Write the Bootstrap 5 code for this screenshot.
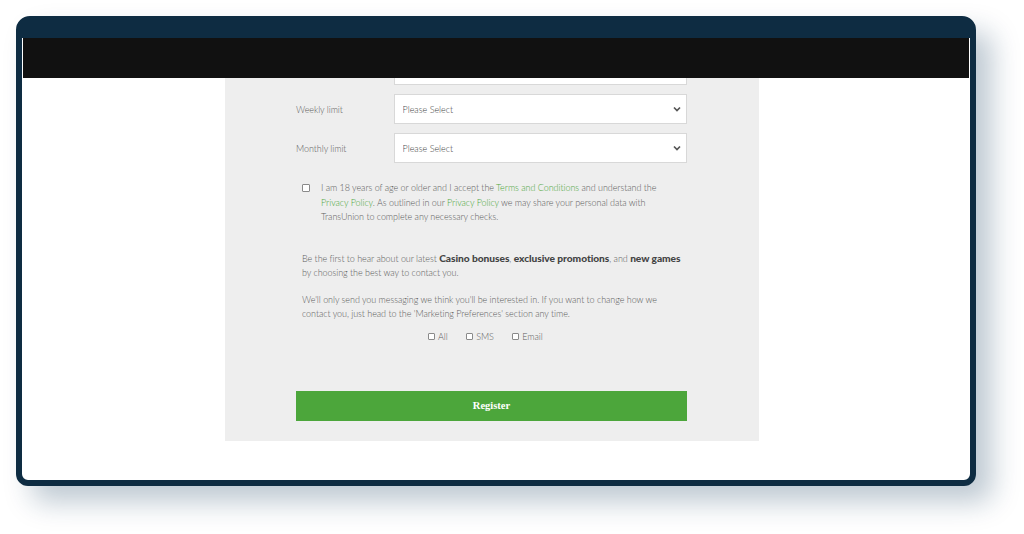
<!DOCTYPE html>
<html lang="en">
<head>
    <meta charset="UTF-8">
    <meta name="viewport" content="width=device-width, initial-scale=1.0">
    <title>Register</title>
    <link href="https://cdn.jsdelivr.net/npm/bootstrap@5.3.0/dist/css/bootstrap.min.css" rel="stylesheet">
    <style>
        html, body { height: 100%; overflow: hidden; background: #fff; }
        body { font-family: "Lato", "Liberation Sans", sans-serif; font-weight: 300; font-size: 9px; letter-spacing: -.05px; color: #5c5c5c; }
        .frame { width: 960px; height: 470px; margin: 16px 0 0 16px; background: #fff; border: solid #0e2c42; border-width: 22px 6px 6px; border-radius: 14px 14px 12px 12px; box-shadow: 16px 16px 28px rgba(14, 54, 88, .27); overflow: hidden; }
        .topbar { height: 40px; margin: 0 1px; background: #111; flex: none; }
        .panel { width: 534px; height: 363px; margin-left: 203px; padding: 0 72px 0 71px; background: #eee; will-change: opacity; }
        .cut-field { height: 7px; margin-left: 97.5px; margin-bottom: 9px; }
        .field-box { width: 293.5px; height: 30px; padding: 2px 8px 0; background-color: #fff; background-image: url("data:image/svg+xml,%3csvg xmlns='http://www.w3.org/2000/svg' viewBox='0 0 16 16'%3e%3cpath fill='none' stroke='%23555' stroke-width='3.4' d='M2 5l6 6 6-6'/%3e%3c/svg%3e"); background-size: 8px 8px; background-position: right 5px center; border: 1px solid #d8d8d8; border-radius: 0; font-size: 9px; font-family: inherit; font-weight: 300; color: #444; }
        .field-row { height: 30px; }
        .field-row + .field-row { margin-top: 9px; }
        .field-row label { width: 97.5px; padding-top: 1px; }
        .terms { margin-top: 18px; padding-left: 6px; padding-right: 27px; line-height: 14.5px; }
        .tick-box { appearance: none; background: #fff; border: 1px solid #8a8a8a; border-radius: 1px; flex: none; }
        .terms .tick-box { width: 8px; height: 8px; margin: 3px 11px 0 0; }
        .terms a, .terms a:hover { color: #4da63b; text-decoration: none; }
        .intro { margin-top: 26px; padding-left: 6px; line-height: 14.5px; }
        .intro p { margin-bottom: 12px; }
        .intro b { font-weight: 900; color: #444; font-size: 10.2px; }
        .channels { margin-top: -3px; margin-left: 132px; gap: 18.5px; line-height: 12px; }
        .channels label { gap: 3px; }
        .channels .tick-box { width: 7px; height: 7px; margin: 0; }
        .reg-btn { height: 30px; margin-top: 48px; background: #4ca63b; border: 0; border-radius: 0; color: #fff; font-family: "Liberation Serif", serif; font-weight: 700; font-size: 10.5px; padding: 1px 0 0; }
        .reg-btn:hover { background: #4ca63b; color: #fff; }
    </style>
</head>
<body>
    <div class="frame d-flex flex-column">
        <div class="topbar"></div>
        <div class="panel">
            <div class="cut-field d-flex align-items-end overflow-hidden">
                <select class="form-select field-box flex-none"><option>Please Select</option></select>
            </div>
            <div class="field-row d-flex align-items-center">
                <label>Weekly limit</label>
                <select class="form-select field-box"><option>Please Select</option></select>
            </div>
            <div class="field-row d-flex align-items-center">
                <label>Monthly limit</label>
                <select class="form-select field-box"><option>Please Select</option></select>
            </div>

            <div class="terms d-flex">
                <input type="checkbox" class="tick-box">
                <div>I am 18 years of age or older and I accept the <a href="#">Terms and Conditions</a> and understand the <a href="#">Privacy Policy</a>. As outlined in our <a href="#">Privacy Policy</a> we may share your personal data with TransUnion to complete any necessary checks.</div>
            </div>

            <div class="intro">
                <p>Be the first to hear about our latest <b>Casino bonuses</b>, <b>exclusive promotions</b>, and <b>new games</b> by choosing the best way to contact you.</p>
                <p>We'll only send you messaging we think you'll be interested in. If you want to change how we contact you, just head to the 'Marketing Preferences' section any time.</p>
            </div>

            <div class="channels d-flex">
                <label class="d-flex align-items-center"><input type="checkbox" class="tick-box"> All</label>
                <label class="d-flex align-items-center"><input type="checkbox" class="tick-box"> SMS</label>
                <label class="d-flex align-items-center"><input type="checkbox" class="tick-box"> Email</label>
            </div>

            <button type="button" class="btn reg-btn w-100">Register</button>
        </div>
    </div>
    <script src="https://cdn.jsdelivr.net/npm/bootstrap@5.3.0/dist/js/bootstrap.bundle.min.js"></script>
</body>
</html>
